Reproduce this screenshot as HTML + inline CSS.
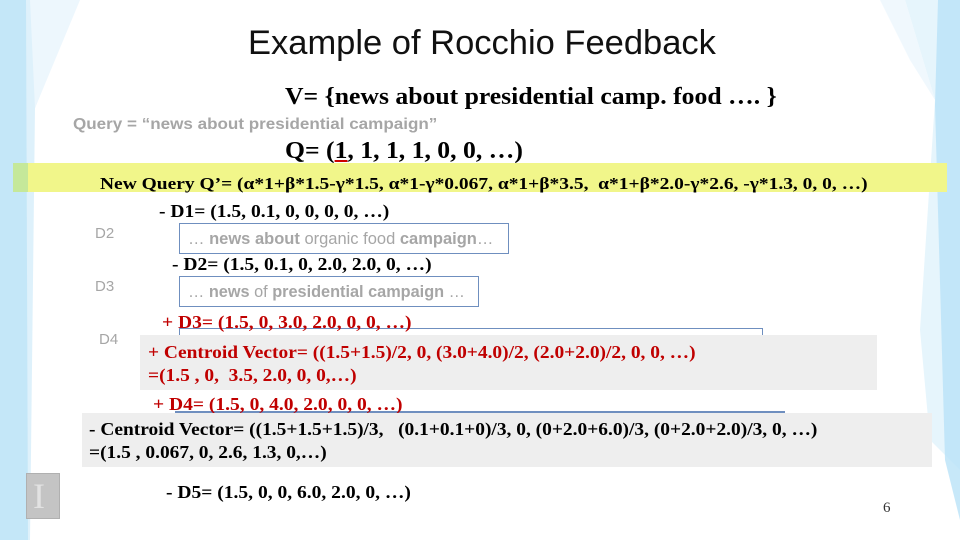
<!DOCTYPE html>
<html><head><meta charset="utf-8"><style>
html,body{margin:0;padding:0}
body{width:960px;height:540px;position:relative;overflow:hidden;background:#fff;font-family:"Liberation Serif",serif}
.a{position:absolute;white-space:nowrap;line-height:1;transform-origin:left center}
.t{font-weight:bold;color:#000}
.r{color:#c00000}
.s{font-family:"Liberation Sans",sans-serif}
.g{color:#a6a6a6}
.box{position:absolute;border:1.5px solid #6f8fbf;box-sizing:border-box}
.gray{position:absolute;background:#eeeeee}
.d{font-size:18px;transform:scaleX(1.085)}
.c{font-size:17.5px;transform:scaleX(1.11)}
</style></head><body>
<svg width="960" height="540" style="position:absolute;left:0;top:0">
<polygon points="0,0 78,0 35,108 30,540 0,540" fill="#d6eefa" opacity="0.8"/>
<polygon points="0,0 26,0 28,540 0,540" fill="#b9e2f7" opacity="0.7"/>
<polygon points="30,0 80,0 35,108" fill="#edf7fd"/>
<polygon points="905,0 960,0 960,470 930,440 920,330 935,100" fill="#e0f2fb" opacity="0.8"/>
<polygon points="938,0 960,0 960,520 945,460 935,105" fill="#b9e2f7" opacity="0.8"/>
<polygon points="880,0 905,0 935,100 910,60" fill="#f0f8fd"/>
</svg>
<div class="a s" style="left:248px;top:26px;font-size:34.5px;color:#111">Example of Rocchio Feedback</div>
<div class="a t" style="left:285px;top:85px;font-size:24px;transform:scaleX(1.07)">V= {news about presidential camp. food …. }</div>
<div class="a s g" style="left:73px;top:117px;font-size:15.5px;font-weight:bold;transform:scaleX(1.1)">Query = “news about presidential campaign”</div>
<div class="a t" style="left:285px;top:139px;font-size:24px;transform:scaleX(1.07)">Q= (<span style="text-decoration:underline;text-decoration-color:#c00">1</span>, 1, 1, 1, 0, 0, …)</div>
<div style="position:absolute;left:13px;top:163px;width:934px;height:29px;background:#f1f68a"></div>
<div style="position:absolute;left:13px;top:163px;width:15px;height:29px;background:#c5e89a"></div>
<div class="a t" style="left:100px;top:175px;font-size:17px;transform:scaleX(1.145)">New Query Q’= (α*1+β*1.5-γ*1.5, α*1-γ*0.067, α*1+β*3.5,&nbsp; α*1+β*2.0-γ*2.6, -γ*1.3, 0, 0, …)</div>
<div class="a t d" style="left:159px;top:202px">- D1= (1.5, 0.1, 0, 0, 0, 0, …)</div>
<div class="a s g" style="left:95px;top:226px;font-size:15px">D2</div>
<div class="box" style="left:179px;top:223px;width:330px;height:31px"></div>
<div class="a s g" style="left:188px;top:231px;font-size:16.5px">… <b>news about</b> organic food <b>campaign</b>…</div>
<div class="a t d" style="left:172px;top:255px">- D2= (1.5, 0.1, 0, 2.0, 2.0, 0, …)</div>
<div class="a s g" style="left:95px;top:279px;font-size:15px">D3</div>
<div class="box" style="left:179px;top:276px;width:300px;height:31px"></div>
<div class="a s g" style="left:188px;top:284px;font-size:16.3px">… <b>news</b> of <b>presidential campaign</b> …</div>
<div style="position:absolute;left:179px;top:328px;width:584px;height:10px;border:1.5px solid #6f8fbf;border-bottom:none;box-sizing:border-box"></div>
<div class="a t r d" style="left:162px;top:313px">+ D3= (1.5, 0, 3.0, 2.0, 0, 0, …)</div>
<div class="a s g" style="left:99px;top:332px;font-size:15px">D4</div>
<div class="gray" style="left:140px;top:335px;width:737px;height:55px"></div>
<div class="a t r c" style="left:148px;top:344px">+ Centroid Vector= ((1.5+1.5)/2, 0, (3.0+4.0)/2, (2.0+2.0)/2, 0, 0, …)</div>
<div class="a t r c" style="left:148px;top:367px">=(1.5 , 0,&nbsp; 3.5, 2.0, 0, 0,…)</div>
<div style="position:absolute;left:175px;top:411px;width:610px;height:1.5px;background:#6f8fbf"></div>
<div class="a t r d" style="left:153px;top:395px">+ D4= (1.5, 0, 4.0, 2.0, 0, 0, …)</div>
<div class="gray" style="left:82px;top:413px;width:850px;height:54px"></div>
<div class="a t c" style="left:89px;top:421px">- Centroid Vector= ((1.5+1.5+1.5)/3,&nbsp;&nbsp; (0.1+0.1+0)/3, 0, (0+2.0+6.0)/3, (0+2.0+2.0)/3, 0, …)</div>
<div class="a t c" style="left:89px;top:444px">=(1.5 , 0.067, 0, 2.6, 1.3, 0,…)</div>
<div class="a t d" style="left:166px;top:483px">- D5= (1.5, 0, 0, 6.0, 2.0, 0, …)</div>
<div class="a" style="left:883px;top:501px;font-size:15px;color:#333">6</div>
<div style="position:absolute;left:26px;top:473px;width:34px;height:46px;background:#c4c4c4;border:1px solid #b0b0b0;box-sizing:border-box"></div>
<div class="a" style="left:33px;top:478px;font-size:36px;color:#e2e2e2;font-family:'Liberation Serif',serif">I</div>
</body></html>
